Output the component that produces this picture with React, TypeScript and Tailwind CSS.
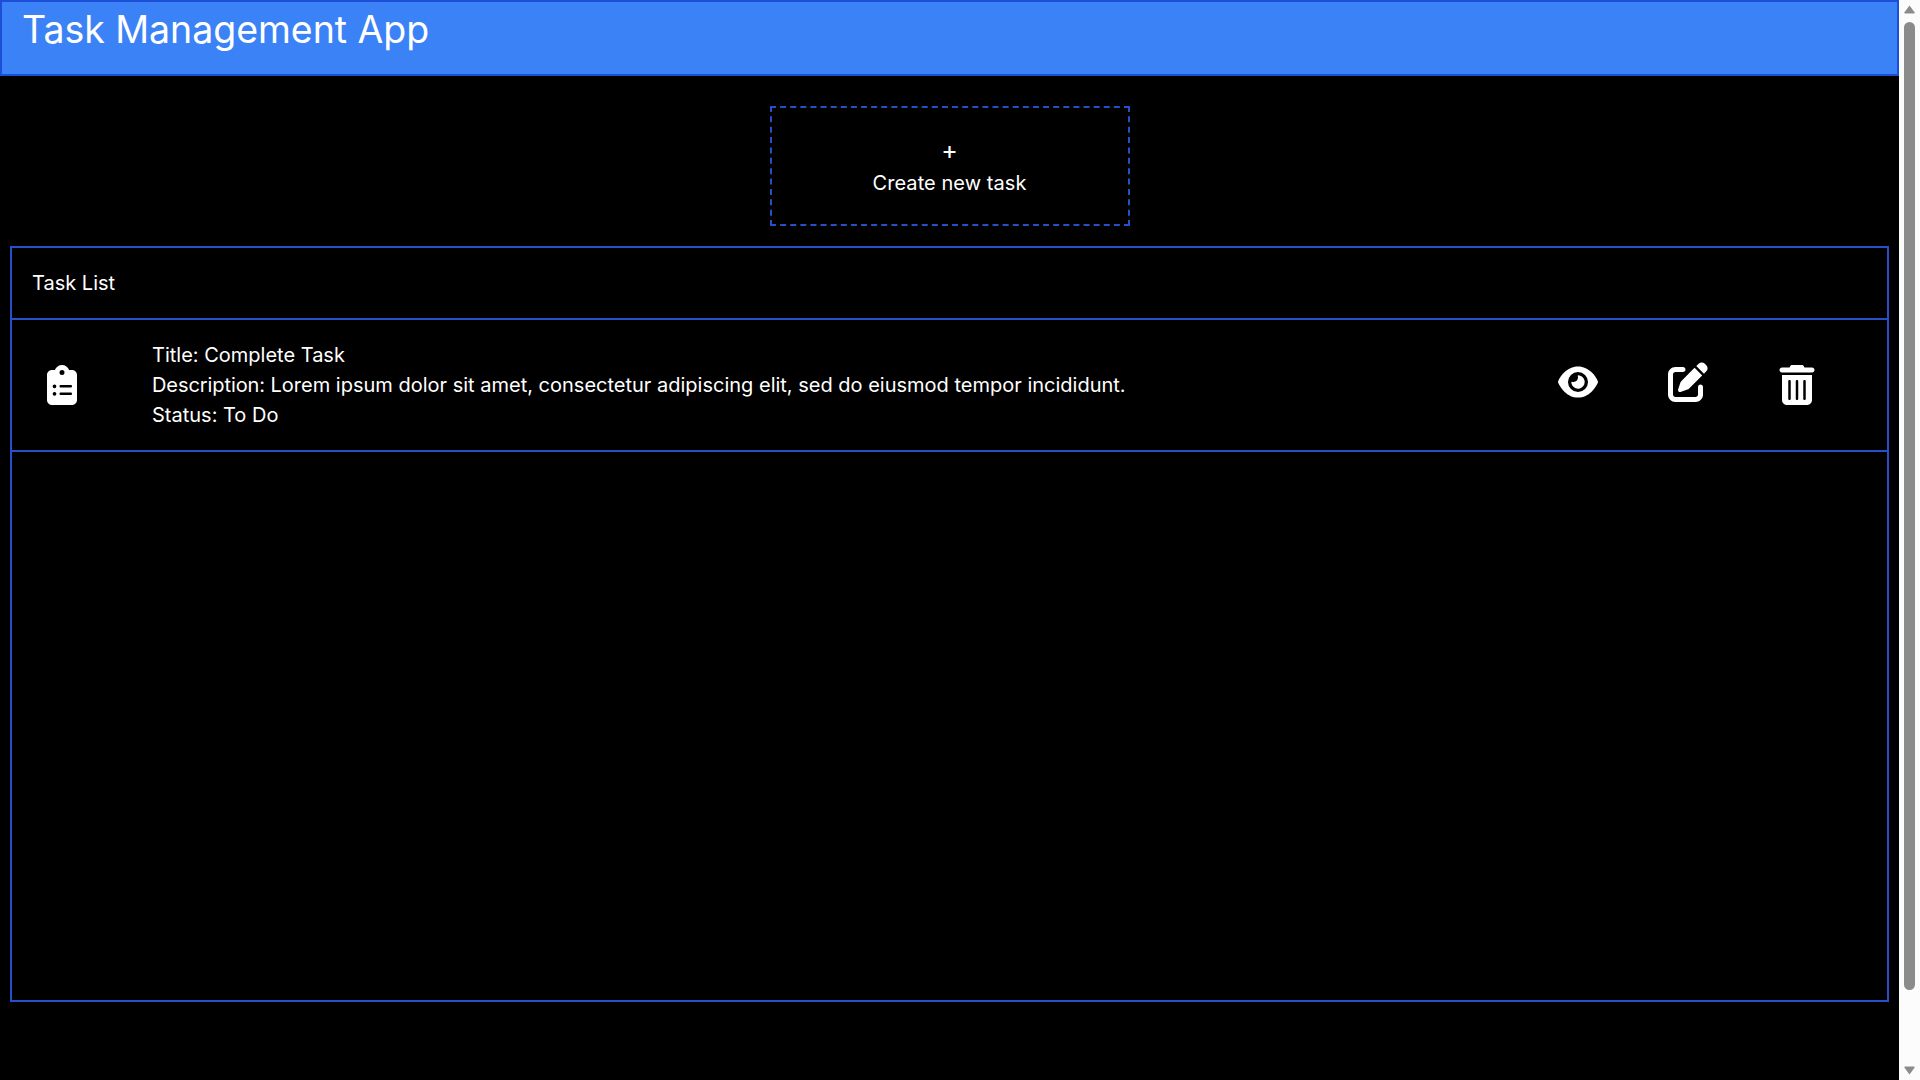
import { FaClipboardList, FaEye, FaPenToSquare, FaTrashCan } from "react-icons/fa6";

function Header() {
  return (
    <header className="h-[76px] border-2 border-[#1d4ed8] bg-[#3b82f6] px-5 pt-[5px]">
      <h1 className="text-[37.5px] leading-[45px] font-normal tracking-[-0.04px]">Task Management App</h1>
    </header>
  );
}

function CreateTask() {
  return (
    <button className="mx-auto mt-[30px] flex h-[120px] w-[360px] flex-col items-center justify-center border-2 border-dashed border-[#2650c8] pb-0.5">
      <span className="text-[25px] leading-[35px]">+</span>
      <span className="tracking-[0.06px]">Create new task</span>
    </button>
  );
}

function TaskRow() {
  return (
    <div className="flex items-center border-b-2 border-[#2650c8] py-5 pl-[30px] pr-[70px]">
      <FaClipboardList size={40} />
      <div className="ml-[70px] flex-1">
        <p>Title: Complete Task</p>
        <p>
          <span className="tracking-[-0.08px]">Description: </span>
          Lorem ipsum dolor sit amet, consectetur adipiscing elit, sed do eiusmod tempor incididunt.
        </p>
        <p>Status: To Do</p>
      </div>
      <div className="flex items-center">
        <FaEye size={40} className="mb-[6px]" />
        <FaPenToSquare size={40} className="mb-[6px] ml-[70px]" />
        <FaTrashCan size={40} className="ml-[69px]" />
      </div>
    </div>
  );
}

function TaskList() {
  return (
    <section className="mx-2.5 mt-5 h-[756px] border-2 border-[#2650c8]">
      <div className="border-b-2 border-[#2650c8] p-5">Task List</div>
      <TaskRow />
    </section>
  );
}

function Scrollbar() {
  return (
    <div className="flex w-[21px] flex-col items-center bg-[#fcfcfc] py-[5px]">
      <svg width="11" height="9" viewBox="0 0 11 9" fill="#8b8b8b">
        <path d="M5.5 0.5 L10.5 7.2 Q11 8.6 9.7 8.6 H1.3 Q0 8.6 0.5 7.2 Z" />
      </svg>
      <div className="mt-2 h-[968px] w-[11px] rounded-full bg-[#8b8b8b]" />
      <svg className="mt-auto" width="11" height="9" viewBox="0 0 11 9" fill="#8b8b8b">
        <path d="M5.5 8.5 L10.5 1.8 Q11 0.4 9.7 0.4 H1.3 Q0 0.4 0.5 1.8 Z" />
      </svg>
    </div>
  );
}

export default function App() {
  return (
    <div className="flex h-screen w-full overflow-hidden bg-black font-['Inter',sans-serif] text-[20px] leading-[30px] text-white">
      <main className="flex-1">
        <Header />
        <CreateTask />
        <TaskList />
      </main>
      <Scrollbar />
    </div>
  );
}
